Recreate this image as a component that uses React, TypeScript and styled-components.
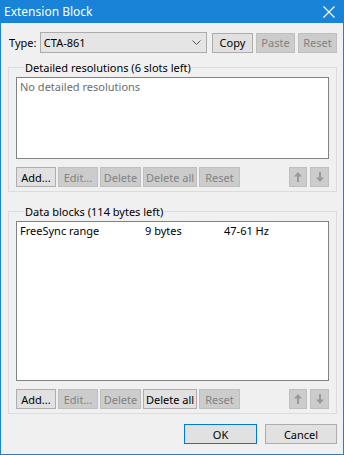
import React from "react";
import styled, { createGlobalStyle } from "styled-components";

const Global = createGlobalStyle`
  html, body { margin: 0; padding: 0; background: #f0f0f0; }
  * { box-sizing: border-box; }
  body { font-family: "Noto Sans", "Segoe UI", sans-serif; font-size: 11px; color: #000; }
`;

const Window = styled.div`
  width: 344px;
  height: 455px;
  display: flex;
  flex-direction: column;
  background: #f0f0f0;
  border: 1px solid #1883d7;
  border-top: none;
`;

const TitleBar = styled.div`
  height: 23px;
  background: #1883d7;
  color: #fff;
  display: flex;
  align-items: center;
  justify-content: space-between;
  padding: 0 9px 0 4px;
  font-size: 12px;
  margin: 0 -1px;
`;

const Content = styled.div`
  flex: 1;
  display: flex;
  flex-direction: column;
  padding: 9px 6px 0 7px;
`;

const TypeRow = styled.div`
  display: flex;
  align-items: center;
  height: 21px;
`;

const Label = styled.span`
  width: 32px;
  line-height: 15px;
  padding-left: 1px;
`;

const Combo = styled.div`
  width: 168px;
  height: 21px;
  background: #e5e5e5;
  border: 1px solid #acacac;
  display: flex;
  align-items: center;
  justify-content: space-between;
  padding: 0 5px 0 3px;
  margin-right: 5px;
`;

const Btn = styled.div<{ $w: number; $disabled?: boolean; $default?: boolean }>`
  width: ${(p) => p.$w}px;
  height: 20px;
  display: flex;
  align-items: center;
  justify-content: center;
  background: ${(p) => (p.$disabled ? "#cccccc" : "#e1e1e1")};
  border: 1px solid ${(p) => (p.$default ? "#0078d7" : p.$disabled ? "#bfbfbf" : "#adadad")};
  color: ${(p) => (p.$disabled ? "#838383" : "#000")};
  white-space: nowrap;
  flex-shrink: 0;
`;

const BtnGroup = styled.div<{ $gap: number }>`
  display: flex;
  gap: ${(p) => p.$gap}px;
`;

const Group = styled.fieldset<{ $top: number }>`
  margin: ${(p) => p.$top}px 0 0 0;
  padding: 2px 7px 4px 7px;
  border: 1px solid #dcdcdc;
  min-width: 0;
`;

const Legend = styled.legend`
  padding: 0 1px;
  margin-left: 8px;
  line-height: 15px;
`;

const ListBox = styled.div<{ $h: number }>`
  height: ${(p) => p.$h}px;
  background: #fff;
  border: 1px solid #828282;
  padding: 1px 3px;
`;

const EmptyText = styled.div`
  color: #6d6d6d;
  line-height: 15px;
`;

const Row = styled.div`
  display: grid;
  grid-template-columns: 125px 79px 1fr;
  line-height: 15px;
`;

const ButtonBar = styled.div`
  display: flex;
  justify-content: space-between;
  margin-top: 8px;
`;

const Footer = styled.div`
  display: flex;
  justify-content: flex-end;
  gap: 8px;
  margin-top: 10px;
`;

const Arrow = ({ down }: { down?: boolean }) => (
  <svg width="8" height="10" viewBox="0 0 8 10" style={{ transform: down ? "rotate(180deg)" : undefined }}>
    <path d="M4 0 L8 4.5 L5 4.5 L5 10 L3 10 L3 4.5 L0 4.5 Z" fill="#9a9a9a" />
  </svg>
);

const Chevron = () => (
  <svg width="9" height="5" viewBox="0 0 9 5">
    <path d="M0.5 0.5 L4.5 4.5 L8.5 0.5" fill="none" stroke="#555" strokeWidth="1" />
  </svg>
);

const CloseX = () => (
  <svg width="12" height="12" viewBox="0 0 12 12">
    <path d="M0.5 0.5 L11.5 11.5 M11.5 0.5 L0.5 11.5" stroke="#fff" strokeWidth="1.2" />
  </svg>
);

const Buttons = ({ deleteAllEnabled }: { deleteAllEnabled?: boolean }) => (
  <ButtonBar>
    <BtnGroup $gap={2}>
      <Btn $w={40}>Add...</Btn>
      <Btn $w={40} $disabled>Edit...</Btn>
      <Btn $w={41} $disabled>Delete</Btn>
      <Btn $w={54} $disabled={!deleteAllEnabled}>Delete all</Btn>
      <Btn $w={41} $disabled>Reset</Btn>
    </BtnGroup>
    <BtnGroup $gap={3}>
      <Btn $w={18} $disabled><Arrow /></Btn>
      <Btn $w={19} $disabled><Arrow down /></Btn>
    </BtnGroup>
  </ButtonBar>
);

export default function App() {
  return (
    <>
      <Global />
      <Window>
        <TitleBar>
          <span>Extension Block</span>
          <CloseX />
        </TitleBar>
        <Content>
          <TypeRow>
            <Label>Type:</Label>
            <Combo>
              <span>CTA-861</span>
              <Chevron />
            </Combo>
            <BtnGroup $gap={3}>
              <Btn $w={41}>Copy</Btn>
              <Btn $w={39} $disabled>Paste</Btn>
              <Btn $w={39} $disabled>Reset</Btn>
            </BtnGroup>
          </TypeRow>
          <Group $top={7}>
            <Legend>Detailed resolutions (6 slots left)</Legend>
            <ListBox $h={82}>
              <EmptyText>No detailed resolutions</EmptyText>
            </ListBox>
            <Buttons />
          </Group>
          <Group $top={12}>
            <Legend>Data blocks (114 bytes left)</Legend>
            <ListBox $h={160}>
              <Row>
                <span>FreeSync range</span>
                <span>9 bytes</span>
                <span>47-61 Hz</span>
              </Row>
            </ListBox>
            <Buttons deleteAllEnabled />
          </Group>
          <Footer>
            <Btn $w={73} $default>OK</Btn>
            <Btn $w={72}>Cancel</Btn>
          </Footer>
        </Content>
      </Window>
    </>
  );
}
